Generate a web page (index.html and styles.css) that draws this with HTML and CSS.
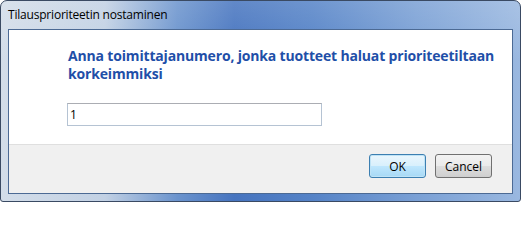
FILE: index.html
```html
<!DOCTYPE html>
<html>
<head>
<meta charset="utf-8">
<link rel="stylesheet" href="styles.css">
</head>
<body>
<div class="window">
  <div class="titlebar"><span class="title">Tilausprioriteetin nostaminen</span></div>
  <div class="client">
    <div class="main">
      <div class="instruction">Anna toimittajanumero, jonka tuotteet haluat prioriteetiltaan korkeimmiksi</div>
      <input class="field" type="text" value="1">
    </div>
    <div class="footer">
      <button class="btn btn-default">OK</button>
      <button class="btn">Cancel</button>
    </div>
  </div>
</div>
</body>
</html>
```
FILE: styles.css
```css
html, body {
  margin: 0;
  padding: 0;
  background: #ffffff;
}
.window {
  box-sizing: border-box;
  width: 521px;
  height: 202px;
  border: 1px solid #3a4a63;
  border-radius: 7px 7px 3px 3px;
  background:
    linear-gradient(180deg, rgba(255,255,255,0.15) 0%, rgba(255,255,255,0) 30%),
    linear-gradient(90deg, #d3dde9 0%, #c2d1e4 20%, #6a93cd 34%, #4674bf 45%, #5583c7 60%, #7aa0d5 80%, #9ab8e0 100%);
  padding: 0 7px 7px 7px;
  display: flex;
  flex-direction: column;
  font-family: "Open Sans", "Noto Sans", sans-serif;
}
.titlebar {
  height: 28px;
  display: flex;
  align-items: center;
  flex: none;
}
.title {
  font-size: 12px;
  color: #000;
  letter-spacing: -0.2px;
  margin-top: -1px;
}
.client {
  flex: 1;
  display: flex;
  flex-direction: column;
  border: 1px solid #4c6a94;
  background: #ffffff;
}
.main {
  flex: 1;
  padding: 17px 0 0 59px;
  border-bottom: 1px solid #dfdfdf;
  display: flex;
  flex-direction: column;
  align-items: flex-start;
}
.instruction {
  width: 440px;
  font-size: 14px;
  font-weight: 700;
  line-height: 18px;
  color: #1f4fa8;
  letter-spacing: -0.17px;
}
.field {
  box-sizing: border-box;
  margin: 20px 0 0 -1px;
  width: 255px;
  height: 23px;
  border: 1px solid #b5c3d3;
  border-top-color: #abadb3;
  padding: 0 2px;
  font-family: "Open Sans", "Noto Sans", sans-serif;
  font-size: 12px;
  color: #000;
  outline: none;
}
.footer {
  height: 48px;
  flex: none;
  background: #f0f0f0;
  display: flex;
  justify-content: flex-end;
  align-items: flex-start;
  gap: 9px;
  padding: 9px 20px 0 0;
  box-sizing: border-box;
}
.btn {
  box-sizing: border-box;
  width: 57px;
  height: 24px;
  border: 1px solid #707070;
  border-radius: 3px;
  background: linear-gradient(180deg, #f2f2f2 0%, #ebebeb 48%, #dddddd 52%, #cfcfcf 100%);
  font-family: "Open Sans", "Noto Sans", sans-serif;
  font-size: 12px;
  color: #000;
  padding: 0;
}
.btn-default {
  border-color: #3c7fb1;
  background: linear-gradient(180deg, #eaf6fd 0%, #d9f0fc 48%, #bee6fd 52%, #a7d9f5 100%);
  box-shadow: inset 0 0 0 1px #bfe3f6;
}
```
